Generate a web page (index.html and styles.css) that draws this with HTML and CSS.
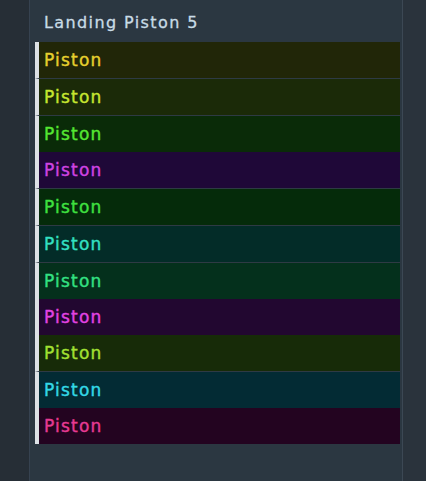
FILE: index.html
```html
<!DOCTYPE html>
<html lang="en">
<head>
    <meta charset="UTF-8">
    <meta name="viewport" content="width=device-width, initial-scale=1.0">
    <title>Landing Piston 5</title>
    <link rel="stylesheet" href="styles.css">
</head>
<body>
    <div class="side side-left"></div>
    <div class="panel">
        <h2 class="panel-title">Landing Piston 5</h2>
        <ul class="piston-list">
            <li class="piston c1">Piston</li>
            <li class="piston c2 sep">Piston</li>
            <li class="piston c3 sep">Piston</li>
            <li class="piston c4">Piston</li>
            <li class="piston c5 sep">Piston</li>
            <li class="piston c6 sep">Piston</li>
            <li class="piston c7 sep">Piston</li>
            <li class="piston c8">Piston</li>
            <li class="piston c9">Piston</li>
            <li class="piston c10 sep">Piston</li>
            <li class="piston c11">Piston</li>
        </ul>
    </div>
    <div class="side side-right"></div>
</body>
</html>
```

FILE: styles.css
```css
body {
    margin: 0;
    padding: 0;
    display: flex;
    height: 481px;
    overflow: hidden;
    background: #272f37;
    font-family: "DejaVu Sans", sans-serif;
}
.side-left {
    width: 29px;
    background: #262e36;
}
.side-right {
    flex: 1;
    background: #2a333c;
}
.panel {
    width: 365px;
    padding: 0 2px 0 5px;
    background: #2b3741;
    border-left: 1px solid #364250;
    border-right: 1px solid #3c4854;
}
.panel-title {
    margin: 0;
    height: 42px;
    box-sizing: border-box;
    padding: 13px 0 0 9px;
    font-size: 16px;
    line-height: 20px;
    font-weight: normal;
    letter-spacing: 1.4px;
    color: #c9dce6;
    -webkit-text-stroke: 0.3px #c9dce6;
}
.piston-list {
    list-style: none;
    margin: 0;
    padding: 0;
}
.piston {
    height: 36px;
    line-height: 37px;
    padding-left: 5px;
    border-left: 4px solid #dde2e6;
    font-size: 17px;
    letter-spacing: 1.2px;
    -webkit-text-stroke: 0.4px currentColor;
}
.piston.sep {
    border-top: 1px solid #2e3a44;
}
.c1 { background: #212608; color: #e6cf2e; }
.c2 { background: #1b2a08; color: #c6e630; }
.c3 { background: #0a2b08; color: #55e632; }
.c4 { background: #1f0838; color: #d043e2; }
.c5 { background: #052b0a; color: #3fe040; }
.c6 { background: #032c28; color: #33e0c2; }
.c7 { background: #04301c; color: #33e082; }
.c8 { background: #220730; color: #e243e2; }
.c9 { background: #172b08; color: #a2e032; }
.c10 { background: #032b34; color: #33d8e6; }
.c11 { background: #230420; color: #e63a92; }
```
